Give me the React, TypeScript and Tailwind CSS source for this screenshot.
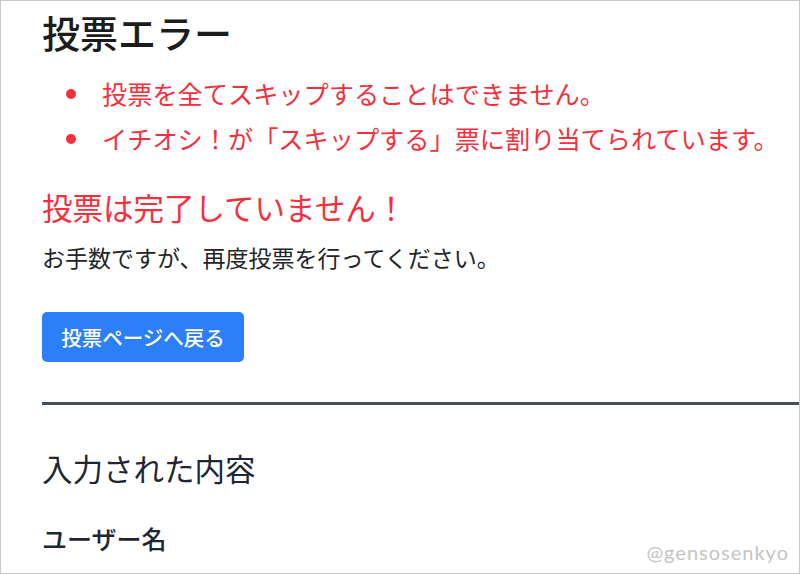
export default function App() {
  return (
    <div className="relative box-border h-[574px] w-[800px] overflow-hidden border border-[#c8c8c8] bg-white font-['Noto_Sans_CJK_JP',sans-serif]">
      <div className="pl-[41px] pt-[9px]">
        {/* Error heading */}
        <h1 className="text-[38px] font-medium leading-[44px] text-[#1c1c1c]">投票エラー</h1>

        <ul className="mt-[17px] text-[25.2px] leading-[45px] text-[#f5303c]">
          <li className="flex items-center">
            <span className="ml-[24px] mr-[26px] h-[10px] w-[10px] rounded-full bg-[#f5303c]" />
            投票を全てスキップすることはできません。
          </li>
          <li className="flex items-center">
            <span className="ml-[24px] mr-[26px] h-[10px] w-[10px] rounded-full bg-[#f5303c]" />
            イチオシ！が「スキップする」票に割り当てられています。
          </li>
        </ul>

        <h3 className="mt-[28px] text-[30.5px] leading-[36px] text-[#f5303c]">投票は完了していません！</h3>
        <p className="mt-[16px] text-[23px] leading-[32px] text-[#212529]">
          お手数ですが、再度投票を行ってください。
        </p>

        <button className="mt-[39px] flex h-[50px] w-[202px] items-center justify-center rounded-[5px] bg-[#2d7ff9] text-[20.5px] font-medium text-white">
          投票ページへ戻る
        </button>

        <hr className="mt-[40px] border-0 border-t-[3px] border-[#434e5c]" />

        {/* Submitted content */}
        <h2 className="mt-[45px] text-[30.5px] leading-[36px] text-[#1f2633]">入力された内容</h2>
        <h4 className="mt-[37px] text-[25px] font-medium leading-[30px] text-[#1f2633]">ユーザー名</h4>
      </div>

      <span className="absolute bottom-[6px] right-[10px] font-['Lato',sans-serif] text-[20px] tracking-[1px] text-[#c4c4c4]">
        @gensosenkyo
      </span>
    </div>
  );
}
